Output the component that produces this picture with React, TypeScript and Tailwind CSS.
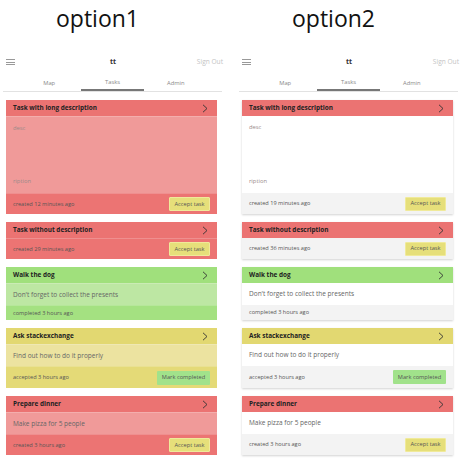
import React from 'react'

type Status = 'open' | 'done' | 'accepted'

interface Task {
  title: string
  desc?: string[]
  footer: string
  status: Status
  tall?: boolean
}

const tasks = (created1: string, created2: string): Task[] => [
  { title: 'Task with long description', desc: ['desc', 'ription'], footer: `created ${created1} ago`, status: 'open', tall: true },
  { title: 'Task without description', footer: `created ${created2} ago`, status: 'open' },
  { title: 'Walk the dog', desc: ["Don't forget to collect the presents"], footer: 'completed 3 hours ago', status: 'done' },
  { title: 'Ask stackexchange', desc: ['Find out how to do it properly'], footer: 'accepted 3 hours ago', status: 'accepted' },
  { title: 'Prepare dinner', desc: ['Make pizza for 5 people'], footer: 'created 3 hours ago', status: 'open' },
]

const colors = {
  open: { head: 'bg-[#eb7372]', body: 'bg-[#f09a99]', foot: 'bg-[#ec7473]' },
  done: { head: 'bg-[#a0e07c]', body: 'bg-[#bde7a3]', foot: 'bg-[#a4e181]' },
  accepted: { head: 'bg-[#e2d871]', body: 'bg-[#ece3a0]', foot: 'bg-[#e4da77]' },
}

function Chevron() {
  return (
    <svg width="6" height="9" viewBox="0 0 6 9" className="shrink-0">
      <path d="M1 0.8 L5 4.5 L1 8.2" fill="none" stroke="#333" strokeWidth="0.9" />
    </svg>
  )
}

function TaskCard({ task, tinted }: { task: Task; tinted: boolean }) {
  const c = colors[task.status]
  const bodyBg = tinted ? c.body : 'bg-white'
  const footBg = tinted ? c.foot : 'bg-[#f3f3f3]'

  let footH = 'h-[21px]'
  if (task.status === 'done') footH = 'h-[15px]'
  if (task.status === 'accepted') footH = 'h-[22px]'

  return (
    <div className={`ml-[3px] mr-[10px] flex flex-col ${tinted ? '' : 'shadow-[0_1px_2px_rgba(0,0,0,0.18)]'}`}>
      <div className={`${c.head} h-[16px] flex items-center justify-between pl-[7px] pr-[9px]`}>
        <span className="text-[6.4px] font-bold text-[#222]">{task.title}</span>
        <Chevron />
      </div>
      {task.desc && (
        <div
          className={`${bodyBg} ${tinted ? 'border-t border-white/20' : ''} flex flex-col justify-between px-[7px] ${
            task.tall ? 'h-[77px] py-[7px] text-[5.8px] text-[#9a8a8a]' : 'h-[22px] justify-center text-[6.5px] text-[#666]'
          }`}
        >
          {task.desc.map((d) => (
            <span key={d}>{d}</span>
          ))}
        </div>
      )}
      <div className={`${footBg} ${tinted ? 'border-t border-white/20' : ''} flex items-center justify-between pl-[7px] pr-[7px] ${footH}`}>
        <span className="text-[5.6px] text-[#555]">{task.footer}</span>
        {task.status === 'open' && (
          <span className="h-[14px] w-[41px] flex items-center justify-center bg-[#e6df7a] text-[5.7px] text-[#555] rounded-[1px] border border-[#f0ea9a]">
            Accept task
          </span>
        )}
        {task.status === 'accepted' && (
          <span className="h-[14px] w-[53px] flex items-center justify-center bg-[#a1e28b] text-[5.7px] text-[#555] rounded-[1px]">
            Mark completed
          </span>
        )}
      </div>
    </div>
  )
}

function Column({ label, tinted, c1, c2 }: { label: string; tinted: boolean; c1: string; c2: string }) {
  return (
    <div className="w-[224px] flex flex-col">
      <div className="h-[48px] pl-[53px] pt-[2px] text-[23px] leading-[32px] text-[#111]">{label}</div>
      <div className="h-[28px] flex items-center justify-between pl-[3px] pr-[4px]">
        <div className="flex flex-col gap-[1.5px] w-[9px]">
          <div className="h-px bg-[#999]" />
          <div className="h-px bg-[#999]" />
          <div className="h-px bg-[#999]" />
        </div>
        <span className="text-[7px] font-bold text-[#333] pl-[14px]">tt</span>
        <span className="text-[6.6px] text-[#c4c4c4]">Sign Out</span>
      </div>
      <div className="mr-[5px]">
        <div className="w-[190px] mx-auto flex">
          {['Map', 'Tasks', 'Admin'].map((t) => (
            <div
              key={t}
              className={`flex-1 h-[15px] flex items-center justify-center text-[5.8px] text-[#888] ${
                t === 'Tasks' ? 'border-b-2 border-[#777]' : ''
              }`}
            >
              {t}
            </div>
          ))}
        </div>
        <div className="h-px bg-[#e2e2e2]" />
      </div>
      <div className="flex flex-col gap-[8px] mt-[8px]">
        {tasks(c1, c2).map((t) => (
          <TaskCard key={t.title} task={t} tinted={tinted} />
        ))}
      </div>
    </div>
  )
}

export default function App() {
  return (
    <div className="w-[474px] h-[468px] bg-white flex gap-[12px] pl-[3px] font-['Open_Sans',sans-serif]">
      <Column label="option1" tinted c1="12 minutes" c2="29 minutes" />
      <Column label="option2" tinted={false} c1="19 minutes" c2="36 minutes" />
    </div>
  )
}
